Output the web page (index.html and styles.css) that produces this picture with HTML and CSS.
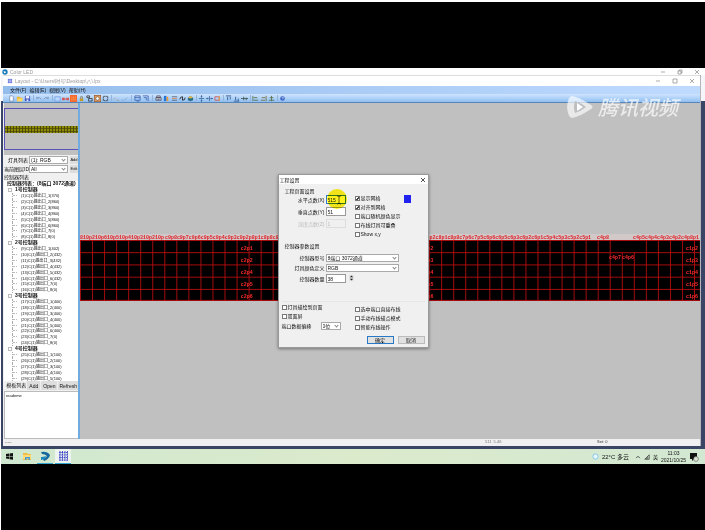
FILE: index.html
```html
<!DOCTYPE html>
<html lang="en">
<head>
<meta charset="utf-8">
<title>Layout</title>
<link rel="stylesheet" href="styles.css">
</head>
<body>
<main class="screen">
  <div class="desktop">
    <header class="titlebar outer">
      <svg class="app-icon" viewBox="0 0 8 8"><circle cx="4" cy="4" r="3.6" fill="#1679b8"/><path d="M2 2.5L6 4 3 6z" fill="#fff"/></svg>
      <span>Color LED</span>
      <svg class="win-controls" viewBox="0 0 44 8"><path d="M2 4h4M19 3h3v3h-3zM20 3V2h3v3h-1M36 2l4 4M40 2l-4 4"/></svg>
    </header>
    <section class="window">
      <header class="titlebar inner">
        <svg class="app-icon" viewBox="0 0 8 8"><path d="M1 2h6M1 4h6M1 6h6M2 1v6M4 1v6M6 1v6" stroke="#5261d8" stroke-width=".8"/></svg>
        <span>Layout - C:\Users\时号\Desktop\八\.lpx</span>
        <svg class="win-controls" viewBox="0 0 44 8"><path d="M2 4h4M19 2h4v4h-4zM36 2l4 4M40 2l-4 4"/></svg>
      </header>
      <nav class="menubar">
        <a href="#">文件(F)</a><a href="#">编辑(E)</a><a href="#">视图(V)</a><a href="#">帮助(H)</a>
      </nav>
      <div class="toolbar">
        <button aria-label="New"><svg viewBox="0 0 8 8"><path d="M2 1h3l1 1v5H2z" fill="#fff" stroke="#4b6390" stroke-width=".6"/></svg></button>
        <button aria-label="Open"><svg viewBox="0 0 8 8"><path d="M1 2h3l1 1h2v4H1z" fill="#e9b430"/><path d="M2 4h6L7 7H1z" fill="#ffd865"/></svg></button>
        <button aria-label="Save"><svg viewBox="0 0 8 8"><path d="M1 1h6v6H1z" fill="#4655bd"/><path d="M2 1h4v3H2zM3 5h2v2H3z" fill="#e8ecff"/></svg></button>
        <i></i>
        <button aria-label="Undo"><svg viewBox="0 0 8 8"><path d="M2 2v2h2M2 4q3-3 5 1" fill="none" stroke="#7f9cc0"/></svg></button>
        <button aria-label="Redo"><svg viewBox="0 0 8 8"><path d="M6 2v2H4M6 4Q3 1 1 5" fill="none" stroke="#7f9cc0"/></svg></button>
        <i></i>
        <button aria-label="Frame"><svg viewBox="0 0 8 8"><path d="M1 2h6v5H1z" fill="#b8d7ff" stroke="#6a94d8" stroke-width=".7"/></svg></button>
        <button aria-label="Link"><svg viewBox="0 0 8 8"><path d="M0 3h3v3H0zM5 3h3v3H5zM3 4h2v1H3z" fill="#d55a55"/></svg></button>
        <button class="on" aria-label="Grid"><svg viewBox="0 0 8 8"><path d="M0 0h8v8H0z" fill="#f4672c"/><path d="M2 1v6M4 1v6M6 1v6M1 3h6M1 5h6" stroke="#ff9854" stroke-width=".5"/></svg></button>
        <button aria-label="Lock"><svg viewBox="0 0 8 8"><path d="M2 4h4v3H2z" fill="#c79a22"/><path d="M3 4V2q1-1 2 0v2" fill="none" stroke="#6b5e22" stroke-width=".7"/></svg></button>
        <button aria-label="Swap"><svg viewBox="0 0 8 8"><path d="M1 1h3v2H1zM3 4h4v3H3z" fill="none" stroke="#333" stroke-width=".9"/></svg></button>
        <button class="on" aria-label="Circle"><svg viewBox="0 0 8 8"><path d="M0 0h8v8H0z" fill="#ed9c58" stroke="#5b4340"/><circle cx="4" cy="4" r="2" fill="#fff" stroke="#554" stroke-width=".7"/></svg></button>
        <button aria-label="Select"><svg viewBox="0 0 8 8"><path d="M1.500 1.500h5v5h-5z" fill="none" stroke="#333" stroke-width=".9" stroke-dasharray="2 .5"/></svg></button>
        <i></i>
        <button aria-label="Line"><svg viewBox="0 0 8 8"><path d="M1 5l2-2M4 6h3" stroke="#b59878" stroke-width=".9"/></svg></button>
        <button aria-label="Curve"><svg viewBox="0 0 8 8"><path d="M1 6h2M4 6l3-3" stroke="#8c9fb8" stroke-width=".9"/></svg></button>
        <i class="wide"></i>
        <button aria-label="Panel"><svg viewBox="0 0 8 8"><path d="M1 1h6v5H1zM1 3h6M3 7h3" fill="none" stroke="#3b5eac" stroke-width=".9"/></svg></button>
        <button aria-label="Panel right"><svg viewBox="0 0 8 8"><path d="M1 1h6v6M2 3h3v3" fill="none" stroke="#3b5eac" stroke-width=".9"/></svg></button>
        <i class="wide"></i>
        <button aria-label="Print"><svg viewBox="0 0 8 8"><path d="M1 3h6v3H1zM2 1h4v2H2zM3 5h2" fill="#ccd" stroke="#445" stroke-width=".8"/></svg></button>
        <button aria-label="Colours"><svg viewBox="0 0 8 8"><path d="M1 1h3v6H1z" fill="#2476da"/><path d="M4 2h2v5H4z" fill="#ed9b31"/></svg></button>
        <button aria-label="Rows"><svg viewBox="0 0 8 8"><path d="M1 2h6M1 6h6" stroke="#5c6b7a"/><path d="M1 4h6" stroke="#db8c56"/></svg></button>
        <button aria-label="Rotate"><svg viewBox="0 0 8 8"><path d="M1 5q0-3 3-3v4q3 0 3-3" fill="none" stroke="#222"/></svg></button>
        <button aria-label="Box"><svg viewBox="0 0 8 8"><path d="M1 3l3-2 3 2v3L4 7 1 6z" fill="#296f87"/><path d="M1 3l3-2 3 2-3 1z" fill="#e3b641"/></svg></button>
        <i></i>
        <button aria-label="Flip vertical"><svg viewBox="0 0 8 8"><path d="M1 4h6M4 0v3M4 5v3M3 2h2M3 6h2" stroke="#315c92" stroke-width=".8"/></svg></button>
        <button aria-label="Flip horizontal"><svg viewBox="0 0 8 8"><path d="M4 1v6M0 4h3M5 4h3M2 3v2M6 3v2" stroke="#315c92" stroke-width=".8"/></svg></button>
        <button aria-label="Scale"><svg viewBox="0 0 8 8"><path d="M1 2h5v4H1z" fill="none" stroke="#d05b5d"/><path d="M6 1v6" stroke="#dda333"/></svg></button>
        <i></i>
        <button aria-label="Align top"><svg viewBox="0 0 8 8"><path d="M1 1h6M3 2v4M6 2v3" stroke="#315c92"/></svg></button>
        <button aria-label="Align bottom"><svg viewBox="0 0 8 8"><path d="M1 7h6M3 2v4M6 4v3" stroke="#315c92"/></svg></button>
        <button aria-label="Align middle"><svg viewBox="0 0 8 8"><path d="M0 4h8M3 2v4M6 3v3" stroke="#465b52"/></svg></button>
        <i></i>
        <button aria-label="Align left"><svg viewBox="0 0 8 8"><path d="M1 1v6M2 3h4M2 6h5" stroke="#59734d"/></svg></button>
        <button aria-label="Align right"><svg viewBox="0 0 8 8"><path d="M7 1v6M2 3h4M1 6h5" stroke="#7d7540"/></svg></button>
        <button aria-label="Align centre"><svg viewBox="0 0 8 8"><path d="M4 1v6M2 3h4M1 6h6" stroke="#59734d"/></svg></button>
        <i></i>
        <button aria-label="Help"><svg viewBox="0 0 8 8"><circle cx="4" cy="4" r="2.600" fill="#3a62c4"/><path d="M3 3h2L4 5" stroke="#fff" stroke-width=".6" fill="none"/></svg></button>
      </div>
      <div class="workspace">
        <aside class="side">
          <div class="preview"><div class="frame"><div class="strip"></div></div></div>
          <div class="pick"><label for="lamp">灯具列表</label><span class="select"><select id="lamp"><option>(1): RGB</option></select></span><button>Add</button></div>
          <div class="pick"><label for="layer">当前图层ID</label><span class="select"><select id="layer"><option>All</option></select></span><button>Edit</button></div>
          <div class="side-label">控制器列表</div>
          <ul class="tree">
            <li class="root">控制器列表：(8端口 3072通道)</li>
            <li class="group">1号控制器</li>
            <li>(1)C(1)输出口_1(370)</li><li>(2)C(1)输出口_2(860)</li><li>(3)C(1)输出口_3(860)</li><li>(4)C(1)输出口_4(860)</li><li>(5)C(1)输出口_5(860)</li><li>(6)C(1)输出口_6(860)</li><li>(7)C(1)输出口_7(0)</li><li>(8)C(1)输出口_8(0)</li>
            <li class="group">2号控制器</li>
            <li>(9)C(1)输出口_1(402)</li><li>(10)C(1)输出口_2(432)</li><li>(11)C(1)输出口_3(432)</li><li>(12)C(1)输出口_4(432)</li><li>(13)C(1)输出口_5(432)</li><li>(14)C(1)输出口_6(432)</li><li>(15)C(1)输出口_7(0)</li><li>(16)C(1)输出口_8(0)</li>
            <li class="group">3号控制器</li>
            <li>(17)C(1)输出口_1(400)</li><li>(18)C(1)输出口_2(400)</li><li>(19)C(1)输出口_3(400)</li><li>(20)C(1)输出口_4(400)</li><li>(21)C(1)输出口_5(400)</li><li>(22)C(1)输出口_6(400)</li><li>(23)C(1)输出口_7(0)</li><li>(24)C(1)输出口_8(0)</li>
            <li class="group">4号控制器</li>
            <li>(25)C(1)输出口_1(100)</li><li>(26)C(1)输出口_2(100)</li><li>(27)C(1)输出口_3(100)</li><li>(28)C(1)输出口_4(100)</li><li>(29)C(1)输出口_5(100)</li>
          </ul>
          <div class="templates"><span>模板列表</span><button>Add</button><button>Open</button><button>Refresh</button></div>
          <div class="files">reademe</div>
        </aside>
        <div class="canvas">
          <svg class="grid" viewBox="0 0 621 68">
            <defs><pattern id="cells" width="12.060" height="12.250" patternUnits="userSpaceOnUse" y="6"><path d="M.5 0v12.250M0 .5h12.060" stroke="#b80c10" stroke-width=".9"/></pattern></defs>
            <path d="M0 0h621v6H0z" fill="#d3c8c8"/>
            <path d="M0 6h621v61H0z" fill="#000"/>
            <path d="M0 6h621v61H0z" fill="url(#cells)"/>
            <path d="M542 7h3v11h-3zM554 7h3v11h-3z" fill="#000"/>
            <path d="M0 66.500h621" stroke="#b80c10"/>
            <g class="top-labels">
              <text x="0">810p</text><text x="12">210p</text><text x="24">610p</text><text x="36">510p</text><text x="48">410p</text><text x="60">310p</text><text x="72">210p</text><text x="85">c9p8</text><text x="97">c9p7</text><text x="109">c9p6</text><text x="121">c9p5</text><text x="133">c9p4</text><text x="145">c9p3</text><text x="157">c9p2</text><text x="169">p8p1</text><text x="181">c8p8</text><text x="193">c8p7</text>
              <text x="344">c8p2</text><text x="356">c8p1</text><text x="368">c8p8</text><text x="380">c7p6</text><text x="392">c7p5</text><text x="404">c6p6</text><text x="416">c6p5</text><text x="428">c6p3</text><text x="440">c6p2</text><text x="452">c6p1</text><text x="464">c5p4</text><text x="476">c5p3</text><text x="488">c5p2</text><text x="500">c5p1</text><text x="518">c4p8</text><text x="554">c4p5</text><text x="566">c4p4</text><text x="578">c4p3</text><text x="590">c4p2</text><text x="602">c4p8</text><text x="614">p1</text>
            </g>
            <g class="cell-labels">
              <text x="161" y="16">c2p1</text><text x="161" y="28">c2p2</text><text x="161" y="40">c2p4</text><text x="161" y="52">c2p5</text><text x="161" y="64">c2p6</text>
              <text x="342" y="16">c3p2</text><text x="342" y="28">c3p3</text><text x="342" y="40">c3p4</text><text x="342" y="52">c3p5</text><text x="342" y="64">c3p6</text>
              <text x="530" y="25">c4p7</text><text x="543" y="25">c4p6</text>
              <text x="607" y="16">c1p2</text><text x="607" y="28">c1p3</text><text x="607" y="40">c1p4</text><text x="607" y="52">c1p5</text><text x="607" y="64">c1p6</text>
            </g>
          </svg>
        </div>
      </div>
      <footer class="status"><span>-----</span><span class="pos">511 &nbsp;5.46</span><span class="sel">Set: 0</span></footer>
    </section>
    <div class="watermark">
      <svg viewBox="0 0 28 24"><path d="M6 1Q2 1 1 12Q2 23 6 23Q13 22 25 14Q28 12 25 10Q13 2 6 1z" fill="#fff" opacity=".65"/><path d="M9 6q-2 6 0 12q6-2 11-6q-5-4-11-6z" fill="#bdbec0"/><path d="M11 8l6 4-6 4z" fill="#fff"/></svg>
      <span>腾讯视频</span>
    </div>
    <form class="dialog" role="dialog" aria-labelledby="dlg-title">
      <header><span id="dlg-title">工程设置</span><button type="button" class="close" aria-label="Close"><svg viewBox="0 0 6 6"><path d="M1 1l4 4M5 1L1 5" stroke="#222" stroke-width=".8"/></svg></button></header>
      <h2>工程页面设置</h2>
      <div class="page-set">
        <div class="fields">
          <label for="px">水平点数(X)</label><input id="px" class="focus" value="515">
          <label for="py">垂直点数(Y)</label><input id="py" value="51">
          <label for="pz" class="off">深度点数(Z)</label><input id="pz" value="1" disabled>
        </div>
        <div class="checks">
          <label><input type="checkbox" checked>显示网格</label>
          <label><input type="checkbox" checked>对齐到网格</label>
          <label><input type="checkbox">端口随机颜色显示</label>
          <label><input type="checkbox">布线灯具可重叠</label>
          <label><input type="checkbox">Show x,y</label>
        </div>
        <button type="button" class="swatch" aria-label="Colour"></button>
        <svg class="pointer" viewBox="0 0 22 22"><circle cx="11" cy="11" r="10" fill="#fff21c"/><path d="M11 8h1l1 1 1-1h1M13 9v6M11 16h1l1-1 1 1h1" fill="none" stroke="#443f10" stroke-width=".8"/></svg>
      </div>
      <h2>控制器参数设置</h2>
      <div class="ctrl-set">
        <label for="model">控制器型号</label><span class="select"><select id="model"><option>8端口 3072通道</option></select></span>
        <label for="order">灯具颜色定义</label><span class="select"><select id="order"><option>RGB</option></select></span>
        <label for="count">控制器数量</label><span class="spin"><input id="count" value="38"><svg viewBox="0 0 6 8"><path d="M0 0h6v8H0z" fill="#e3e3e3"/><path d="M3 1l2 2H1zM3 7l2-2H1z" fill="#222"/></svg></span>
      </div>
      <div class="options">
        <div class="left">
          <label><input type="checkbox">灯具描绘到页面</label>
          <label><input type="checkbox">双面屏</label>
          <div class="offset"><label for="shift">端口数据偏移</label><span class="select"><select id="shift"><option>0位</option></select></span></div>
        </div>
        <div class="right">
          <label><input type="checkbox">选中端口直接布线</label>
          <label><input type="checkbox">手动布线描点模式</label>
          <label><input type="checkbox">智能布线操作</label>
        </div>
      </div>
      <footer><button type="button" class="primary">确定</button><button type="button">取消</button></footer>
    </form>
  </div>
  <footer class="taskbar">
    <button aria-label="Start"><svg viewBox="0 0 16 14"><path d="M5 5l3-.5V7H5zM8.500 4.400L12 4v3H8.500zM5 7.500h3v2.600L5 9.600zM8.500 7.500H12v3.200l-3.500-.5z" fill="#111"/></svg></button>
    <button aria-label="Files"><svg viewBox="0 0 16 14"><path d="M4 4h4l1 1h3v6H4z" fill="#f1bd49"/><path d="M4 6h8v4H4z" fill="#ffdc75"/><path d="M6 11V8h5v3H9.500V9.500h-2V11z" fill="#4c9bd5"/></svg></button>
    <button class="running" aria-label="Color LED"><svg viewBox="0 0 16 14"><path d="M4 3q6-1 9 3-1 4-6 6l-1-2q3-1 4-3-2-2-5-2z" fill="#17669e"/><path d="M4 8q3 0 5-1l-1 3-4 1z" fill="#1d86bf"/></svg></button>
    <button class="running current" aria-label="Layout"><svg viewBox="0 0 16 14"><path d="M4 3.500h9M4 6h9M4 8.500h9M4 11h9M5 2v10M7.500 2v10M10 2v10M12.500 2v10" stroke="#3b42c4" stroke-width=".9" stroke-dasharray="1.700 .6"/></svg></button>
    <div class="tray">
      <svg class="moon" viewBox="0 0 8 8"><circle cx="4" cy="4" r="3" fill="#e8f8ff" stroke="#62b8e8" stroke-width=".8"/></svg>
      <span class="weather">22°C 多云</span>
      <svg class="small" viewBox="0 0 8 8"><path d="M1.500 5.500L4 3l2.500 2.500" fill="none" stroke="#222"/></svg>
      <svg class="small" viewBox="0 0 8 8"><path d="M1 7L7 1v6zM3 7V5M5 7V3" fill="none" stroke="#333" stroke-width=".9"/></svg>
      <span>英</span>
      <time><span>11:03</span><span>2021/10/25</span></time>
      <svg class="note" viewBox="0 0 10 10"><path d="M1 1h7v6H5L3 9V7H1z" fill="#111"/><circle cx="7" cy="7" r="2.400" fill="#dde6d6" stroke="#555" stroke-width=".6"/></svg>
    </div>
  </footer>
</main>
</body>
</html>
```
FILE: styles.css
```css
*, *::before, *::after { box-sizing: border-box; }

body {
  display: flex;
  height: 100vh;
  margin: 0;
  padding: 2px 0 0 1px;
  background: linear-gradient(90deg, #fff 1px, transparent 1px), linear-gradient(#fff 2px, #000 2px);
  color: #111;
  font: 5px/6px "Liberation Sans", "Noto Sans CJK SC", sans-serif;
}

button, input, select {
  margin: 0;
  padding: 0;
  border: 0;
  border-radius: 0;
  background: none;
  color: inherit;
  font: inherit;
  appearance: none;
}

svg { display: block; }
a { color: inherit; text-decoration: none; }

.screen {
  display: flex;
  flex: 1;
  flex-direction: column;
  min-width: 0;
  margin: 66px 0;
}

.desktop {
  position: relative;
  display: flex;
  flex: 1;
  flex-direction: column;
  min-height: 0;
  padding: 0 4px 3px 2px;
  background: linear-gradient(#f6f6fa 33px, #3a4464 33px);
}

/* Title bars */
.titlebar {
  display: flex;
  flex: none;
  align-items: center;
  gap: 2px;
  background: #fff;
  color: #999;
}
.titlebar.outer { height: 7px; margin: 0 -4px 0 -2px; padding: 0 2px 0 1px; }
.titlebar.inner { height: 11px; padding: 0 2px 0 4px; border-top: 1px solid #ddd; }
.app-icon { width: 6px; height: 6px; }
.win-controls { width: 44px; height: 8px; margin-left: auto; fill: none; stroke: #888; stroke-width: .7; }

.window {
  display: flex;
  flex: 1;
  flex-direction: column;
  min-height: 0;
  border-right: 1px solid #b4b4ba;
}

.menubar {
  display: flex;
  flex: none;
  gap: 3px;
  height: 8px;
  padding: 0 7px;
  background: linear-gradient(90deg, #94bdeb, #bfdaff);
  line-height: 8px;
}

.toolbar {
  display: flex;
  flex: none;
  align-items: center;
  height: 9px;
  padding-left: 5px;
  border-bottom: 1px solid #5686ba;
  background: linear-gradient(#cfe4ff, #91bff0);
}
.toolbar button { width: 8px; height: 8px; }
.toolbar svg { width: 7px; height: 7px; }
.toolbar i { width: 1px; height: 6px; margin: 0 1px; background: #93b3dc; }
.toolbar .wide { margin: 0 2px; }

/* Work area */
.workspace { display: flex; flex: 1; min-height: 0; background: #c0c0c0; }

.side {
  display: flex;
  flex-direction: column;
  width: 77px;
  min-height: 0;
  padding-left: 1px;
  border-right: 2px solid #70aade;
  background: #f0f0f0;
}
.preview { flex: none; height: 52px; padding: 5px 0; background: #c0c0c0; }
.frame {
  display: flex;
  align-items: center;
  height: 42px;
  border: solid #5853b4;
  border-width: 1px 0 1px 1px;
}
.strip {
  flex: 1;
  height: 7px;
  background:
    repeating-linear-gradient(90deg, transparent 0 2px, #4b4a08 2px 3px),
    repeating-linear-gradient(#8e8c06 0 2px, #5b5a07 2px 3px);
}

.pick {
  display: grid;
  flex: none;
  grid-template-columns: 24px 39px 1fr;
  gap: 1px;
  align-items: center;
  height: 9px;
  overflow: hidden;
}
.pick label { text-align: right; white-space: nowrap; }
.pick button { overflow: hidden; height: 8px; margin-left: 1px; background: #ddd; font-size: 4px; }
.side-label { flex: none; height: 8px; line-height: 8px; }

.select { position: relative; display: flex; height: 8px; border: 1px solid #aaa; background: #fff; }
.select select { flex: 1; min-width: 0; padding-left: 1px; line-height: 6px; }
.select::after {
  content: "";
  position: absolute;
  top: 1px;
  right: 2px;
  width: 3px;
  height: 3px;
  border: solid #888;
  border-width: 0 1px 1px 0;
  transform: rotate(45deg);
}

.tree {
  display: grid;
  flex: 1;
  grid-auto-rows: minmax(0, 1fr);
  min-height: 0;
  margin: 0;
  padding: 0 0 0 3px;
  overflow: hidden;
  background: #fff;
  list-style: none;
  white-space: nowrap;
}
.tree li {
  display: flex;
  align-items: center;
  min-height: 0;
  margin-left: 5px;
  border-left: 1px dotted #aaa;
  font-size: 4px;
  line-height: 5px;
}
.tree li::before { content: ""; width: 4px; margin-right: 4px; border-top: 1px dotted #bbb; }
.tree .root, .tree .group { margin-left: 0; border: 0; font-size: 5px; font-weight: bold; }
.tree .root::before { display: none; }
.tree .group::before { width: 4px; height: 4px; margin: 0 3px 0 1px; border: 1px solid #bbb; }

.templates {
  display: flex;
  flex: none;
  gap: 1px;
  justify-content: flex-end;
  height: 10px;
  line-height: 8px;
  white-space: nowrap;
}
.templates button { flex: none; height: 9px; padding: 0 2px; background: #ddd; }
.templates button:last-child { padding: 0 1px; }
.files { flex: none; height: 48px; padding: 1px; border: 1px solid #bbb; border-right: 0; background: #fff; font-size: 4px; }

.canvas { flex: 1; min-width: 0; padding-top: 131px; }
.grid { width: 100%; height: auto; font-family: "Liberation Mono", monospace; font-size: 5px; }
.top-labels text { transform: translateY(5px); fill: #e01c24; font-weight: bold; }
.cell-labels { fill: #ff2c2c; font-weight: bold; }

.status {
  display: grid;
  flex: none;
  grid-template-columns: 480px 112px 1fr;
  height: 7px;
  padding-left: 2px;
  background: #f0f0f2;
  color: #777;
  font-size: 4px;
}
.sel { color: #333; }

/* Video mark */
.watermark {
  position: absolute;
  top: 27px;
  right: 27px;
  display: flex;
  gap: 4px;
  align-items: center;
  color: rgb(255 255 255 / .7);
  font: italic 500 20px/24px "Noto Sans CJK SC", sans-serif;
}
.watermark svg { width: 28px; height: 24px; }

/* Settings dialog */
.dialog {
  position: absolute;
  top: 106px;
  left: 0;
  right: 0;
  width: 151px;
  margin: 0 auto;
  padding-bottom: 3px;
  border: 1px solid #999;
  background: #f0f0f0;
  box-shadow: 0 1px 3px #0006;
  white-space: nowrap;
}
.dialog header {
  display: flex;
  justify-content: space-between;
  align-items: center;
  height: 9px;
  padding: 0 2px 0 1px;
  background: #fff;
}
.close svg { width: 6px; height: 6px; }
.dialog h2 { margin: 3px 0 0 6px; font-size: 5px; font-weight: normal; line-height: 8px; }

.page-set {
  position: relative;
  display: grid;
  grid-template-columns: 67px 40px 1fr;
  gap: 9px;
  height: 44px;
}
.fields {
  display: grid;
  grid-template-columns: 46px 20px;
  grid-auto-rows: 9px;
  gap: 3px 1px;
  align-content: start;
  align-items: center;
}
.fields label, .ctrl-set label { text-align: right; }
.fields input, .spin input { width: 20px; height: 9px; padding-left: 1px; border: 1px solid #999; background: #fff; }
.fields .focus { border-color: #3078c8; }
.fields .off, .fields input:disabled { border-color: #ddd; background: #f0f0f0; color: #bbb; }

.checks { display: flex; flex-direction: column; gap: 3px; }
.dialog label:has([type="checkbox"]) { display: flex; gap: 1px; align-items: center; height: 6px; }
[type="checkbox"] { flex: none; width: 5px; height: 5px; border: 1px solid #777; background: #fff; }
[type="checkbox"]:checked { background: linear-gradient(135deg, #fff 40%, #444 40% 70%, #fff 70%); }
.swatch { width: 7px; height: 8px; background: #2222ee; }
.pointer { position: absolute; top: -7px; left: 47px; width: 22px; height: 22px; mix-blend-mode: multiply; }

.ctrl-set {
  display: grid;
  grid-template-columns: 46px 73px;
  gap: 2px 1px;
  align-items: center;
  margin-top: 4px;
}
.spin { display: flex; gap: 3px; }
.spin svg { width: 5px; height: 8px; }

.options {
  display: grid;
  grid-template-columns: 73px 1fr;
  margin: 18px 3px 0;
  padding-top: 2px;
  border-top: 1px solid #e6e6e6;
}
.left, .right { display: flex; flex-direction: column; gap: 3px; }
.right { padding-top: 2px; }
.offset { display: flex; justify-content: space-between; align-items: center; padding-right: 14px; }
.offset .select { width: 20px; }

.dialog footer { display: flex; gap: 4px; justify-content: flex-end; margin-top: 6px; padding-right: 3px; }
.dialog footer button { width: 27px; height: 8px; border: 1px solid #bbb; background: #e1e1e1; line-height: 6px; }
.dialog footer .primary { border-color: #2779c8; }

/* Taskbar */
.taskbar { display: flex; flex: none; height: 15px; background: linear-gradient(90deg, #d0e8d0, #dbeacb 50%, #d3e8d2); }
.taskbar button { width: 16px; margin-right: 2px; border-bottom: 1px solid transparent; }
.taskbar button svg { width: 16px; height: 14px; }
.taskbar .running { border-color: #33a5cc; }
.taskbar .current { background: #edf3ee; }
.tray { display: flex; gap: 3px; align-items: center; margin-left: auto; padding-right: 6px; }
.weather { margin-right: 3px; font-size: 6px; }
.tray time { display: flex; flex-direction: column; align-items: center; line-height: 7px; }
.moon { width: 7px; height: 7px; }
.small { width: 6px; height: 6px; }
.note { width: 10px; height: 10px; }
```
